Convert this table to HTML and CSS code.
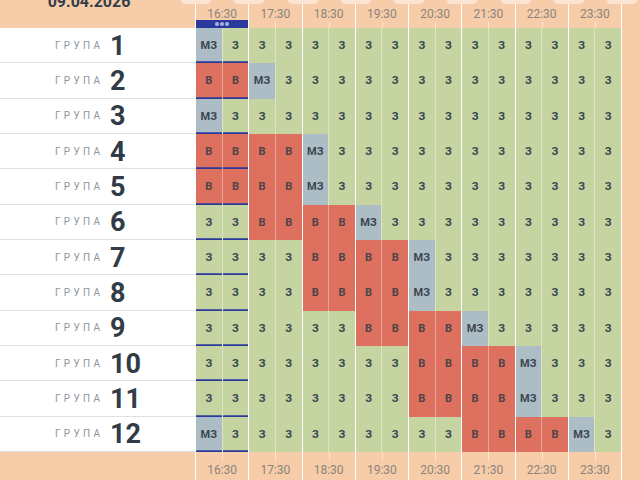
FILE: index.html
```html
<!DOCTYPE html>
<html lang="uk">
<head>
<meta charset="utf-8">
<title>Розклад груп</title>
<link rel="stylesheet" href="styles.css">
</head>
<body>
<div class="board">
  <div class="head">
    <div class="corner"><span class="date">09.04.2026</span></div>
    <div class="hh now"><span class="t">16:30</span><span class="bar"><i></i><i></i><i></i></span></div>
    <div class="hh"><span class="t">17:30</span></div>
    <div class="hh"><span class="t">18:30</span></div>
    <div class="hh"><span class="t">19:30</span></div>
    <div class="hh"><span class="t">20:30</span></div>
    <div class="hh"><span class="t">21:30</span></div>
    <div class="hh"><span class="t">22:30</span></div>
    <div class="hh"><span class="t">23:30</span></div>
    <div class="rest tabbed"></div>
  </div>

  <div class="row">
    <div class="label"><span class="g">ГРУПА</span><span class="n">1</span></div>
    <div class="hour cur"><span class="c m">МЗ</span><span class="c z">З</span></div>
    <div class="hour"><span class="c z">З</span><span class="c z">З</span></div>
    <div class="hour"><span class="c z">З</span><span class="c z">З</span></div>
    <div class="hour"><span class="c z">З</span><span class="c z">З</span></div>
    <div class="hour"><span class="c z">З</span><span class="c z">З</span></div>
    <div class="hour"><span class="c z">З</span><span class="c z">З</span></div>
    <div class="hour"><span class="c z">З</span><span class="c z">З</span></div>
    <div class="hour"><span class="c z">З</span><span class="c z">З</span></div>
    <div class="rest"></div>
  </div>

  <div class="row">
    <div class="label"><span class="g">ГРУПА</span><span class="n">2</span></div>
    <div class="hour cur"><span class="c v">В</span><span class="c v">В</span></div>
    <div class="hour"><span class="c m">МЗ</span><span class="c z">З</span></div>
    <div class="hour"><span class="c z">З</span><span class="c z">З</span></div>
    <div class="hour"><span class="c z">З</span><span class="c z">З</span></div>
    <div class="hour"><span class="c z">З</span><span class="c z">З</span></div>
    <div class="hour"><span class="c z">З</span><span class="c z">З</span></div>
    <div class="hour"><span class="c z">З</span><span class="c z">З</span></div>
    <div class="hour"><span class="c z">З</span><span class="c z">З</span></div>
    <div class="rest"></div>
  </div>

  <div class="row">
    <div class="label"><span class="g">ГРУПА</span><span class="n">3</span></div>
    <div class="hour cur"><span class="c m">МЗ</span><span class="c z">З</span></div>
    <div class="hour"><span class="c z">З</span><span class="c z">З</span></div>
    <div class="hour"><span class="c z">З</span><span class="c z">З</span></div>
    <div class="hour"><span class="c z">З</span><span class="c z">З</span></div>
    <div class="hour"><span class="c z">З</span><span class="c z">З</span></div>
    <div class="hour"><span class="c z">З</span><span class="c z">З</span></div>
    <div class="hour"><span class="c z">З</span><span class="c z">З</span></div>
    <div class="hour"><span class="c z">З</span><span class="c z">З</span></div>
    <div class="rest"></div>
  </div>

  <div class="row">
    <div class="label"><span class="g">ГРУПА</span><span class="n">4</span></div>
    <div class="hour cur"><span class="c v">В</span><span class="c v">В</span></div>
    <div class="hour"><span class="c v">В</span><span class="c v">В</span></div>
    <div class="hour"><span class="c m">МЗ</span><span class="c z">З</span></div>
    <div class="hour"><span class="c z">З</span><span class="c z">З</span></div>
    <div class="hour"><span class="c z">З</span><span class="c z">З</span></div>
    <div class="hour"><span class="c z">З</span><span class="c z">З</span></div>
    <div class="hour"><span class="c z">З</span><span class="c z">З</span></div>
    <div class="hour"><span class="c z">З</span><span class="c z">З</span></div>
    <div class="rest"></div>
  </div>

  <div class="row">
    <div class="label"><span class="g">ГРУПА</span><span class="n">5</span></div>
    <div class="hour cur"><span class="c v">В</span><span class="c v">В</span></div>
    <div class="hour"><span class="c v">В</span><span class="c v">В</span></div>
    <div class="hour"><span class="c m">МЗ</span><span class="c z">З</span></div>
    <div class="hour"><span class="c z">З</span><span class="c z">З</span></div>
    <div class="hour"><span class="c z">З</span><span class="c z">З</span></div>
    <div class="hour"><span class="c z">З</span><span class="c z">З</span></div>
    <div class="hour"><span class="c z">З</span><span class="c z">З</span></div>
    <div class="hour"><span class="c z">З</span><span class="c z">З</span></div>
    <div class="rest"></div>
  </div>

  <div class="row">
    <div class="label"><span class="g">ГРУПА</span><span class="n">6</span></div>
    <div class="hour cur"><span class="c z">З</span><span class="c z">З</span></div>
    <div class="hour"><span class="c v">В</span><span class="c v">В</span></div>
    <div class="hour"><span class="c v">В</span><span class="c v">В</span></div>
    <div class="hour"><span class="c m">МЗ</span><span class="c z">З</span></div>
    <div class="hour"><span class="c z">З</span><span class="c z">З</span></div>
    <div class="hour"><span class="c z">З</span><span class="c z">З</span></div>
    <div class="hour"><span class="c z">З</span><span class="c z">З</span></div>
    <div class="hour"><span class="c z">З</span><span class="c z">З</span></div>
    <div class="rest"></div>
  </div>

  <div class="row">
    <div class="label"><span class="g">ГРУПА</span><span class="n">7</span></div>
    <div class="hour cur"><span class="c z">З</span><span class="c z">З</span></div>
    <div class="hour"><span class="c z">З</span><span class="c z">З</span></div>
    <div class="hour"><span class="c v">В</span><span class="c v">В</span></div>
    <div class="hour"><span class="c v">В</span><span class="c v">В</span></div>
    <div class="hour"><span class="c m">МЗ</span><span class="c z">З</span></div>
    <div class="hour"><span class="c z">З</span><span class="c z">З</span></div>
    <div class="hour"><span class="c z">З</span><span class="c z">З</span></div>
    <div class="hour"><span class="c z">З</span><span class="c z">З</span></div>
    <div class="rest"></div>
  </div>

  <div class="row">
    <div class="label"><span class="g">ГРУПА</span><span class="n">8</span></div>
    <div class="hour cur"><span class="c z">З</span><span class="c z">З</span></div>
    <div class="hour"><span class="c z">З</span><span class="c z">З</span></div>
    <div class="hour"><span class="c v">В</span><span class="c v">В</span></div>
    <div class="hour"><span class="c v">В</span><span class="c v">В</span></div>
    <div class="hour"><span class="c m">МЗ</span><span class="c z">З</span></div>
    <div class="hour"><span class="c z">З</span><span class="c z">З</span></div>
    <div class="hour"><span class="c z">З</span><span class="c z">З</span></div>
    <div class="hour"><span class="c z">З</span><span class="c z">З</span></div>
    <div class="rest"></div>
  </div>

  <div class="row">
    <div class="label"><span class="g">ГРУПА</span><span class="n">9</span></div>
    <div class="hour cur"><span class="c z">З</span><span class="c z">З</span></div>
    <div class="hour"><span class="c z">З</span><span class="c z">З</span></div>
    <div class="hour"><span class="c z">З</span><span class="c z">З</span></div>
    <div class="hour"><span class="c v">В</span><span class="c v">В</span></div>
    <div class="hour"><span class="c v">В</span><span class="c v">В</span></div>
    <div class="hour"><span class="c m">МЗ</span><span class="c z">З</span></div>
    <div class="hour"><span class="c z">З</span><span class="c z">З</span></div>
    <div class="hour"><span class="c z">З</span><span class="c z">З</span></div>
    <div class="rest"></div>
  </div>

  <div class="row">
    <div class="label"><span class="g">ГРУПА</span><span class="n">10</span></div>
    <div class="hour cur"><span class="c z">З</span><span class="c z">З</span></div>
    <div class="hour"><span class="c z">З</span><span class="c z">З</span></div>
    <div class="hour"><span class="c z">З</span><span class="c z">З</span></div>
    <div class="hour"><span class="c z">З</span><span class="c z">З</span></div>
    <div class="hour"><span class="c v">В</span><span class="c v">В</span></div>
    <div class="hour"><span class="c v">В</span><span class="c v">В</span></div>
    <div class="hour"><span class="c m">МЗ</span><span class="c z">З</span></div>
    <div class="hour"><span class="c z">З</span><span class="c z">З</span></div>
    <div class="rest"></div>
  </div>

  <div class="row">
    <div class="label"><span class="g">ГРУПА</span><span class="n">11</span></div>
    <div class="hour cur"><span class="c z">З</span><span class="c z">З</span></div>
    <div class="hour"><span class="c z">З</span><span class="c z">З</span></div>
    <div class="hour"><span class="c z">З</span><span class="c z">З</span></div>
    <div class="hour"><span class="c z">З</span><span class="c z">З</span></div>
    <div class="hour"><span class="c v">В</span><span class="c v">В</span></div>
    <div class="hour"><span class="c v">В</span><span class="c v">В</span></div>
    <div class="hour"><span class="c m">МЗ</span><span class="c z">З</span></div>
    <div class="hour"><span class="c z">З</span><span class="c z">З</span></div>
    <div class="rest"></div>
  </div>

  <div class="row">
    <div class="label"><span class="g">ГРУПА</span><span class="n">12</span></div>
    <div class="hour cur"><span class="c m">МЗ</span><span class="c z">З</span></div>
    <div class="hour"><span class="c z">З</span><span class="c z">З</span></div>
    <div class="hour"><span class="c z">З</span><span class="c z">З</span></div>
    <div class="hour"><span class="c z">З</span><span class="c z">З</span></div>
    <div class="hour"><span class="c z">З</span><span class="c z">З</span></div>
    <div class="hour"><span class="c v">В</span><span class="c v">В</span></div>
    <div class="hour"><span class="c v">В</span><span class="c v">В</span></div>
    <div class="hour"><span class="c m">МЗ</span><span class="c z">З</span></div>
    <div class="rest"></div>
  </div>

  <div class="foot">
    <div class="corner"></div>
    <div class="fh"><span class="t">16:30</span></div>
    <div class="fh"><span class="t">17:30</span></div>
    <div class="fh"><span class="t">18:30</span></div>
    <div class="fh"><span class="t">19:30</span></div>
    <div class="fh"><span class="t">20:30</span></div>
    <div class="fh"><span class="t">21:30</span></div>
    <div class="fh"><span class="t">22:30</span></div>
    <div class="fh"><span class="t">23:30</span></div>
    <div class="rest"></div>
  </div>
</div>
</body>
</html>
```
FILE: styles.css
```css
* { box-sizing: border-box; }
html, body { margin: 0; padding: 0; }
body {
  background: #f6cca9;
  font-family: Roboto, "Noto Sans", "Liberation Sans", sans-serif;
  width: 640px;
  height: 480px;
  overflow: hidden;
}
.board {
  display: flex;
  flex-direction: column;
  height: 480px;
}
.head, .foot {
  height: 28px;
  display: flex;
  flex: none;
}
.row {
  height: 35.333px;
  display: flex;
  flex: none;
}
.corner {
  width: 195px;
  flex: none;
  display: flex;
  justify-content: center;
  padding-right: 17px;
}
.date {
  font-size: 16px;
  font-weight: 700;
  color: #323d48;
  line-height: 16px;
  margin-top: -6.5px;
}
.hh, .fh {
  width: 53.25px;
  flex: none;
  border-left: 1px solid #fff;
  position: relative;
  display: flex;
  justify-content: center;
}
.t {
  font-size: 12px;
  color: #8b847d;
  line-height: 14px;
}
.hh .t { margin-top: 7px; }
.fh .t { margin-top: 11px; }
.hh::after, .fh::after {
  content: "";
  position: absolute;
  left: 26.1px;
  width: 1px;
  background: rgba(255, 255, 255, 0.55);
}
.hh::after { top: 22px; bottom: 0; }
.fh::after { top: 0; height: 8px; }
.hh::before, .tabbed::before {
  content: "";
  position: absolute;
  top: 0;
  left: -15px;
  width: 30px;
  height: 3.5px;
  background: #fbe4d3;
  border-radius: 0 0 4px 4px;
  z-index: 2;
}
.tabbed { position: relative; }
.bar {
  position: absolute;
  left: 0;
  right: 0;
  bottom: 0;
  height: 8.5px;
  background: #2a3a9c;
  display: flex;
  justify-content: center;
  align-items: center;
  gap: 1.5px;
  z-index: 1;
}
.bar i {
  width: 3.5px;
  height: 3.5px;
  border-radius: 50%;
  background: #a3addf;
}
.rest {
  flex: 1;
  border-left: 1px solid #fff;
}
.label {
  width: 195px;
  flex: none;
  background: #fff;
  border-bottom: 1.5px solid #dae2e8;
  display: flex;
  align-items: center;
  padding-left: 55px;
}
.g {
  font-size: 10px;
  letter-spacing: 3.3px;
  color: #8e959b;
  width: 55px;
}
.n {
  font-size: 27px;
  font-weight: 700;
  color: #313c47;
  padding-top: 1px;
}
.hour {
  width: 53.25px;
  flex: none;
  display: flex;
  border-left: 1px solid #fff;
}
.c {
  flex: 1;
  display: flex;
  align-items: center;
  justify-content: center;
  font-size: 11px;
  font-weight: 700;
  color: #3b4650;
}
.c + .c { border-left: 1px solid rgba(255, 255, 255, 0.35); }
.z { background: #c6d4a1; }
.v { background: #de7060; color: #4a4446; }
.m { background: #adbdc6; }
.hour.cur .c { box-shadow: inset 0 -1.7px 0 #2a3a9c; }
```
